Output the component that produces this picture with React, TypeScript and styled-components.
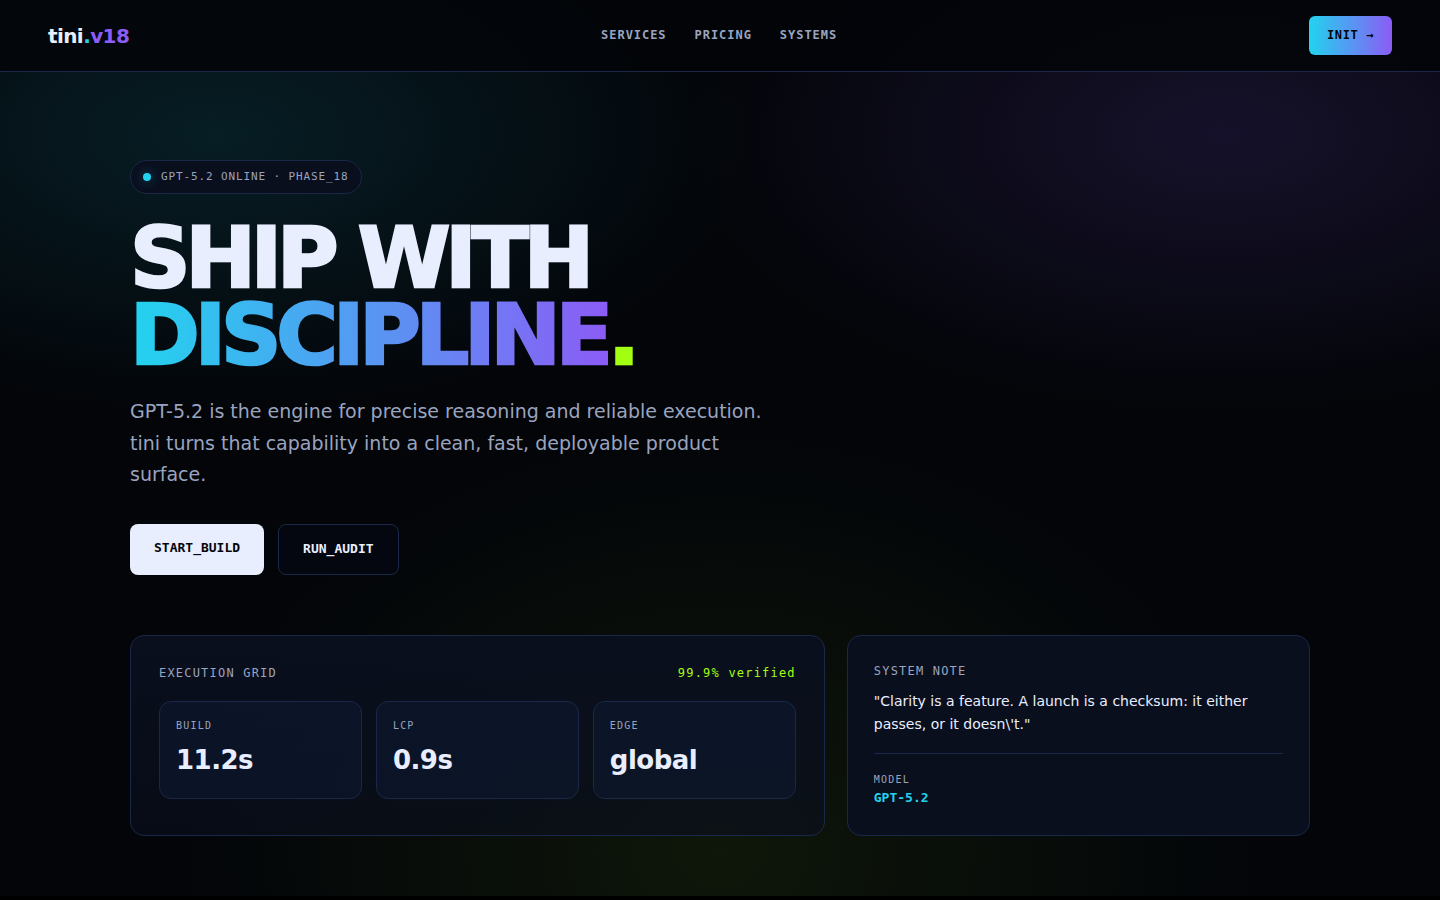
import React from "react";
import styled, { createGlobalStyle, css } from "styled-components";

const c = {
  bg: "#030509",
  text: "#e9eeff",
  muted: "#9aa4bf",
  cyan: "#22d3ee",
  violet: "#8b5cf6",
  lime: "#a3ff12",
  panel: "#0a0f1e",
  line: "#1a2748",
};
const sans = `"DejaVu Sans", sans-serif`;
const mono = `"DejaVu Sans Mono", monospace`;

const GlobalStyle = createGlobalStyle`
  *, *::before, *::after { box-sizing: border-box; }
  html { background: #000; }
  body {
    margin: 0;
    color: ${c.text};
    font-family: ${sans};
    line-height: 1.6;
    overflow-x: hidden;
  }
  a { color: inherit; text-decoration: none; }
  h1, h2, p, dl, dd, blockquote { margin: 0; }
`;

const Page = styled.div`
  background:
    radial-gradient(900px 460px at 15% 15%, rgba(34, 211, 238, 0.12), transparent 60%),
    radial-gradient(900px 460px at 85% 15%, rgba(139, 92, 246, 0.14), transparent 60%),
    radial-gradient(900px 700px at 50% 95%, rgba(163, 255, 18, 0.07), transparent 60%),
    ${c.bg};
`;

const Nav = styled.header`
  display: flex;
  justify-content: space-between;
  align-items: center;
  padding: 16px 48px;
  background: rgba(3, 4, 8, 0.8);
  border-bottom: 1px solid ${c.line};
`;

const Logo = styled.a`
  font-size: 20px;
  font-weight: 700;
  letter-spacing: -0.03em;
`;

const Tint = styled.span<{ $color: string }>`
  color: ${(p) => p.$color};
`;

const Links = styled.nav`
  display: flex;
  gap: 28px;
`;

const NavLink = styled.a`
  color: ${c.muted};
  font: 700 12px/1.6 ${mono};
  letter-spacing: 0.08em;
`;

const InitLink = styled.a`
  padding: 10px 18px;
  border-radius: 6px;
  background: linear-gradient(90deg, ${c.cyan}, ${c.violet});
  color: ${c.bg};
  font: 700 12px/1.6 ${mono};
  letter-spacing: 0.05em;
`;

const Main = styled.main`
  max-width: 1180px;
  margin: 0 auto;
  padding: 88px 0 60px;
  @media (max-width: 1240px) {
    padding-left: 24px;
    padding-right: 24px;
  }
`;

const Pill = styled.div`
  display: flex;
  width: fit-content;
  align-items: center;
  gap: 10px;
  padding: 7px 12px;
  border: 1px solid ${c.line};
  border-radius: 999px;
  background: ${c.panel};
  color: ${c.muted};
  font: 400 11px/1.6 ${mono};
  letter-spacing: 0.08em;
`;

const Dot = styled.span`
  width: 8px;
  height: 8px;
  border-radius: 50%;
  background: ${c.cyan};
  box-shadow: 0 0 12px rgba(34, 211, 238, 0.4);
`;

const Title = styled.h1`
  margin: 26px 0 22px;
  font-size: 84px;
  line-height: 0.92;
  font-weight: 950;
  letter-spacing: -0.06em;
`;

const Gradient = styled.span`
  background: linear-gradient(90deg, ${c.cyan}, ${c.violet});
  background-clip: text;
  -webkit-background-clip: text;
  color: transparent;
`;

const Lead = styled.p`
  max-width: 650px;
  color: ${c.muted};
  font-size: 19px;
  line-height: 1.65;
`;

const Actions = styled.div`
  display: flex;
  gap: 14px;
  margin: 34px 0 60px;
`;

const Action = styled.a<{ $primary?: boolean }>`
  padding: 14px 24px;
  border-radius: 8px;
  font: 700 13px/1.6 ${mono};
  ${(p) =>
    p.$primary
      ? css`
          background: ${c.text};
          color: ${c.bg};
        `
      : css`
          border: 1px solid ${c.line};
          background: rgba(5, 9, 20, 0.6);
        `}
`;

const Panels = styled.div`
  display: grid;
  grid-template-columns: 3fr 2fr;
  gap: 22px;
  @media (max-width: 900px) {
    grid-template-columns: 1fr;
  }
`;

const Panel = styled.section<{ $pad: number; $fade?: boolean }>`
  padding: ${(p) => p.$pad}px;
  border: 1px solid ${c.line};
  border-radius: 14px;
  background: ${(p) =>
    p.$fade ? `linear-gradient(180deg, ${c.panel}, rgba(10, 15, 30, 0.6))` : c.panel};
`;

const PanelHead = styled.div`
  display: flex;
  justify-content: space-between;
  margin-bottom: 18px;
  font: 400 12px/1.6 ${mono};
  letter-spacing: 0.1em;
`;

const PanelTitle = styled.h2`
  color: ${c.muted};
  font: 400 12px/1.6 ${mono};
  letter-spacing: 0.1em;
`;

const Stats = styled.dl`
  display: grid;
  grid-template-columns: repeat(3, 1fr);
  gap: 14px;
`;

const Stat = styled.div`
  padding: 16px;
  border: 1px solid ${c.line};
  border-radius: 12px;
  background: rgba(12, 22, 42, 0.8);
`;

const Label = styled.dt`
  color: ${c.muted};
  font: 400 10px/1.6 ${mono};
  letter-spacing: 0.12em;
`;

const StatValue = styled.dd`
  margin-top: 6px;
  font-size: 26px;
  font-weight: 700;
  letter-spacing: -0.02em;
`;

const Quote = styled.blockquote`
  margin: 9px 0 18px;
  font-size: 14px;
`;

const Model = styled.dl`
  padding-top: 18px;
  border-top: 1px solid ${c.line};
`;

const ModelValue = styled.dd`
  color: ${c.cyan};
  font: 700 13px/1.6 ${mono};
`;

const links = ["SERVICES", "PRICING", "SYSTEMS"];
const stats = [
  { label: "BUILD", value: "11.2s" },
  { label: "LCP", value: "0.9s" },
  { label: "EDGE", value: "global" },
];

export default function App() {
  return (
    <Page>
      <GlobalStyle />
      <Nav>
        <Logo href="#">
          tini<Tint $color={c.cyan}>.</Tint>
          <Tint $color={c.violet}>v18</Tint>
        </Logo>
        <Links aria-label="Main">
          {links.map((name) => (
            <NavLink key={name} href={`#${name.toLowerCase()}`}>
              {name}
            </NavLink>
          ))}
        </Links>
        <InitLink href="#init">INIT →</InitLink>
      </Nav>
      <Main>
        <Pill>
          <Dot />
          GPT-5.2 ONLINE · PHASE_18
        </Pill>
        <Title>
          SHIP WITH
          <br />
          <Gradient>DISCIPLINE</Gradient>
          <Tint $color={c.lime}>.</Tint>
        </Title>
        <Lead>
          GPT-5.2 is the engine for precise reasoning and reliable execution. tini turns that
          capability into a clean, fast, deployable product surface.
        </Lead>
        <Actions>
          <Action $primary href="#build">
            START_BUILD
          </Action>
          <Action href="#audit">RUN_AUDIT</Action>
        </Actions>
        <Panels>
          <Panel $pad={28} $fade>
            <PanelHead>
              <PanelTitle>EXECUTION GRID</PanelTitle>
              <Tint $color={c.lime}>99.9% verified</Tint>
            </PanelHead>
            <Stats>
              {stats.map((s) => (
                <Stat key={s.label}>
                  <Label>{s.label}</Label>
                  <StatValue>{s.value}</StatValue>
                </Stat>
              ))}
            </Stats>
          </Panel>
          <Panel $pad={26}>
            <PanelTitle>SYSTEM NOTE</PanelTitle>
            <Quote>"Clarity is a feature. A launch is a checksum: it either passes, or it doesn\'t."</Quote>
            <Model>
              <Label>MODEL</Label>
              <ModelValue>GPT-5.2</ModelValue>
            </Model>
          </Panel>
        </Panels>
      </Main>
    </Page>
  );
}
